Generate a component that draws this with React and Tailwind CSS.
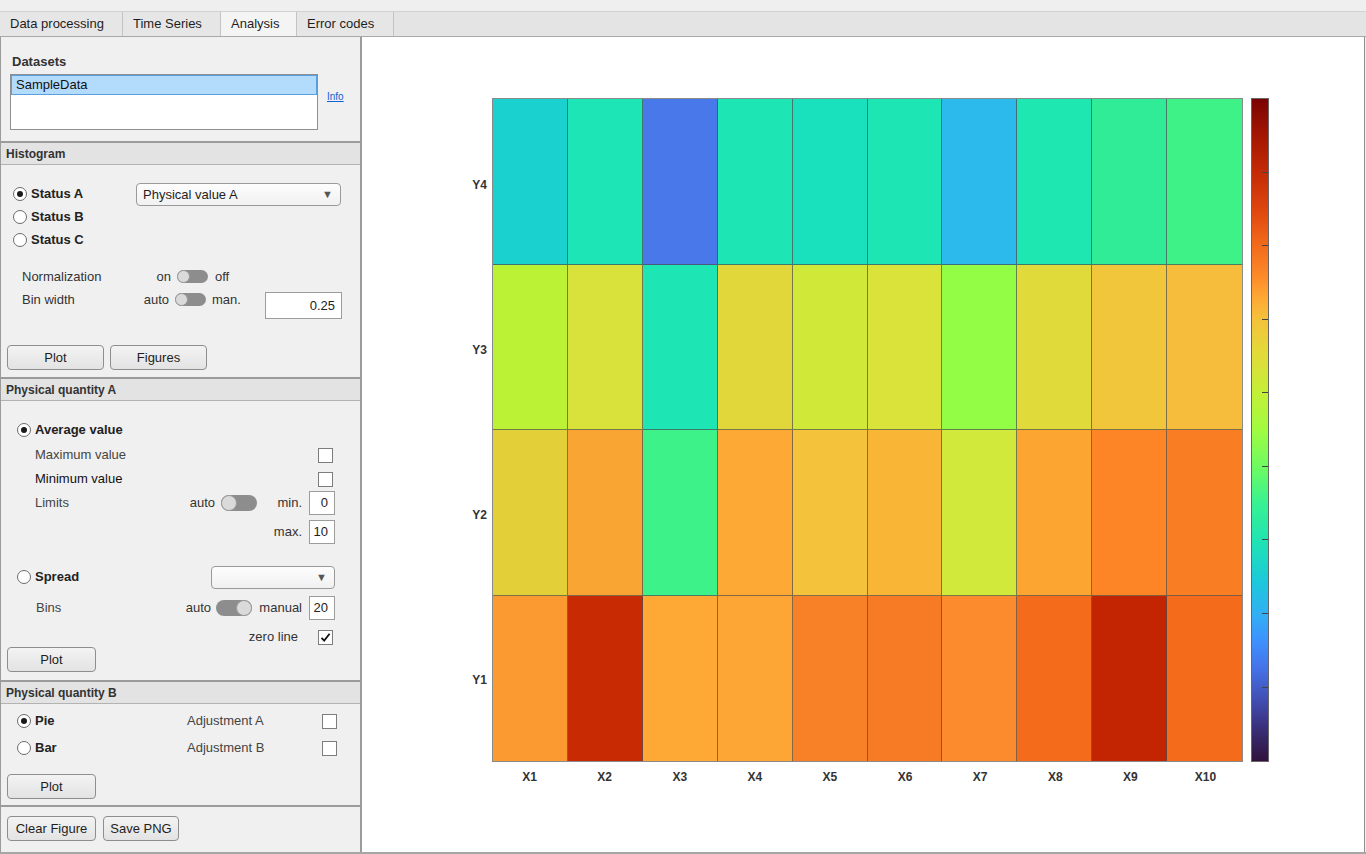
import React from "react";

const tabs = [
  { label: "Data processing", w: "w-[123px]" },
  { label: "Time Series", w: "w-[98px]" },
  { label: "Analysis", w: "w-[76px]", active: true },
  { label: "Error codes", w: "w-[97px]" },
];

// rows from top (Y4) to bottom (Y1)
const cells = [
  ["#1bd1cf", "#1de5b6", "#4878ea", "#1ee5b4", "#1ae1bd", "#1de5b4", "#2cbaec", "#1ee7b1", "#30ec97", "#3ff287"],
  ["#bcf236", "#d8e23a", "#1de5b4", "#e1d63a", "#d0e838", "#dae33a", "#93fd45", "#e0da3a", "#f2c63b", "#f5bd3b"],
  ["#e3cf38", "#f9a534", "#3ef28a", "#fda935", "#f5c23c", "#f9b536", "#d0e93a", "#fda531", "#fd8525", "#f97e23"],
  ["#fb9a30", "#c82a04", "#fea835", "#fda535", "#f88026", "#f77a24", "#fb8b2c", "#f56b1c", "#c32503", "#f56b1c"],
];

const Radio = ({ checked }) => (
  <span className="flex h-[14px] w-[14px] shrink-0 items-center justify-center rounded-full border border-[#6b6b6b] bg-white">
    {checked && <span className="h-[6px] w-[6px] rounded-full bg-[#1a1a1a]" />}
  </span>
);

const Checkbox = ({ checked }) => (
  <span className="flex h-[15px] w-[15px] shrink-0 items-center justify-center border border-[#7d7d7d] bg-white">
    {checked && (
      <svg width="11" height="11" viewBox="0 0 11 11">
        <path d="M1.5 5.8 L4.2 8.6 L9.6 1.8" fill="none" stroke="#111" strokeWidth="1.8" />
      </svg>
    )}
  </span>
);

const Toggle = ({ right, size }) => (
  <span
    className={`flex shrink-0 rounded-full bg-[#8d8d8d] ${size} ${right ? "justify-end" : "justify-start"}`}
  >
    <span className="aspect-square h-full rounded-full border border-[#9a9a9a] bg-[#dadada]" />
  </span>
);

const Button = ({ children, w }) => (
  <div
    className={`flex h-[25px] ${w} items-center justify-center rounded-[4px] border border-[#8e8e8e] bg-gradient-to-b from-[#f3f3f3] to-[#e3e3e3] text-[13px] text-[#1e1e1e]`}
  >
    {children}
  </div>
);

const NumBox = ({ value, w, h }) => (
  <div className={`flex ${w} ${h} shrink-0 items-center justify-end border border-[#9c9c9c] bg-white pr-[6px] text-[13px] text-[#222]`}>
    {value}
  </div>
);

const Dropdown = ({ text, w }) => (
  <div className={`flex h-[23px] ${w} shrink-0 items-center rounded-[4px] border border-[#9a9a9a] bg-gradient-to-b from-[#fdfdfd] to-[#f1f1f1] pl-[6px] pr-[7px] text-[13px] text-[#1e1e1e]`}>
    <span>{text}</span>
    <span className="ml-auto text-[11px] text-[#555]">▼</span>
  </div>
);

const Header = ({ children }) => (
  <div className="flex h-[22px] items-center border-b border-[#b3b3b3] bg-[#e3e3e3] pl-[5px] text-[12px] font-bold text-[#333]">
    {children}
  </div>
);

const LeftPanel = () => (
  <div className="flex w-[362px] flex-col border-l border-r-2 border-[#9b9b9b] bg-[#f0f0f0] text-[13px] text-[#333]">
    {/* Datasets */}
    <div className="h-[106px] border-b-2 border-[#9b9b9b] pt-[17px]">
      <div className="h-[16px] pl-[11px] text-[13px] font-bold leading-[16px] text-[#333]">Datasets</div>
      <div className="mt-[4px] flex">
        <div className="ml-[9px] h-[56px] w-[308px] border border-[#8f8f8f] bg-white">
          <div className="flex h-[20px] items-center border border-[#5a9fe0] bg-[#b3dbfb] pl-[4px] text-[13px] text-[#111]">
            SampleData
          </div>
        </div>
        <span className="ml-[9px] mt-[17px] self-start text-[10px] leading-[12px] text-[#0b63d3] underline">Info</span>
      </div>
    </div>

    {/* Histogram */}
    <div className="h-[236px] border-b-2 border-[#9b9b9b]">
      <Header>Histogram</Header>
      <div className="pt-[17px]">
        <div className="flex">
          <div className="w-[135px] pl-[12px]">
            {["Status A", "Status B", "Status C"].map((s, i) => (
              <div key={s} className="flex h-[23px] items-center gap-[4px]">
                <Radio checked={i === 0} />
                <span className="font-bold text-[#222]">{s}</span>
              </div>
            ))}
          </div>
          <div className="mt-[1px]">
            <Dropdown text="Physical value A" w="w-[205px]" />
          </div>
        </div>
        <div className="mt-[14px] flex h-[23px] items-center pl-[21px]">
          <span className="w-[115px]">Normalization</span>
          <span className="w-[34px] text-right">on</span>
          <span className="ml-[6px]">
            <Toggle size="w-[31px] h-[13px]" />
          </span>
          <span className="ml-[7px]">off</span>
        </div>
        <div className="flex items-start pl-[21px]">
          <span className="h-[23px] w-[115px] leading-[23px]">Bin width</span>
          <span className="h-[23px] w-[32px] text-right leading-[23px]">auto</span>
          <span className="ml-[6px] flex h-[23px] items-center">
            <Toggle size="w-[31px] h-[13px]" />
          </span>
          <span className="ml-[6px] h-[23px] w-[53px] leading-[23px]">man.</span>
          <div className="mt-[4px]">
            <NumBox value="0.25" w="w-[77px]" h="h-[27px]" />
          </div>
        </div>
        <div className="mt-[26px] flex gap-[6px] pl-[6px]">
          <Button w="w-[97px]">Plot</Button>
          <Button w="w-[97px]">Figures</Button>
        </div>
      </div>
    </div>

    {/* Physical quantity A */}
    <div className="h-[303px] border-b-2 border-[#9b9b9b]">
      <Header>Physical quantity A</Header>
      <div className="pt-[17px]">
        <div className="flex h-[24px] items-center gap-[4px] pl-[16px]">
          <Radio checked />
          <span className="font-bold text-[#222]">Average value</span>
        </div>
        <div className="mt-[1px] flex h-[24px] items-center justify-between pl-[34px] pr-[27px]">
          <span className="text-[#444]">Maximum value</span>
          <Checkbox />
        </div>
        <div className="flex h-[24px] items-center justify-between pl-[34px] pr-[27px]">
          <span className="text-[#111]">Minimum value</span>
          <Checkbox />
        </div>
        <div className="flex h-[24px] items-center pl-[34px] pr-[25px]">
          <span className="text-[#444]">Limits</span>
          <span className="ml-auto">auto</span>
          <span className="ml-[6px]">
            <Toggle size="w-[36px] h-[16px]" />
          </span>
          <span className="w-[45px] text-right">min.</span>
          <span className="ml-[7px]">
            <NumBox value="0" w="w-[26px]" h="h-[24px]" />
          </span>
        </div>
        <div className="mt-[5px] flex h-[24px] items-center justify-end pr-[25px]">
          <span>max.</span>
          <span className="ml-[7px]">
            <NumBox value="10" w="w-[26px]" h="h-[24px]" />
          </span>
        </div>
        <div className="mt-[21px] flex h-[24px] items-center pl-[16px] pr-[25px]">
          <Radio />
          <span className="ml-[4px] font-bold text-[#222]">Spread</span>
          <span className="ml-auto">
            <Dropdown text="" w="w-[124px]" />
          </span>
        </div>
        <div className="mt-[7px] flex h-[24px] items-center pl-[35px] pr-[25px]">
          <span className="text-[#444]">Bins</span>
          <span className="ml-auto">auto</span>
          <span className="ml-[5px]">
            <Toggle right size="w-[36px] h-[16px]" />
          </span>
          <span className="w-[50px] text-right">manual</span>
          <span className="ml-[7px]">
            <NumBox value="20" w="w-[26px]" h="h-[24px]" />
          </span>
        </div>
        <div className="mt-[7px] flex h-[20px] items-center justify-end pr-[27px]">
          <span>zero line</span>
          <span className="ml-[20px]">
            <Checkbox checked />
          </span>
        </div>
        <div className="pl-[6px]">
          <Button w="w-[89px]">Plot</Button>
        </div>
      </div>
    </div>

    {/* Physical quantity B */}
    <div className="h-[125px] border-b-2 border-[#9b9b9b]">
      <Header>Physical quantity B</Header>
      <div className="pt-[5px]">
        {[
          ["Pie", "Adjustment A"],
          ["Bar", "Adjustment B"],
        ].map(([r, adj], i) => (
          <div key={r} className={`flex h-[24px] items-center pr-[23px] ${i === 1 ? "mt-[3px]" : ""}`}>
            <div className="flex w-[186px] items-center gap-[4px] pl-[16px]">
              <Radio checked={i === 0} />
              <span className="font-bold text-[#222]">{r}</span>
            </div>
            <span className="flex-1 text-[#444]">{adj}</span>
            <Checkbox />
          </div>
        ))}
        <div className="mt-[14px] pl-[6px]">
          <Button w="w-[89px]">Plot</Button>
        </div>
      </div>
    </div>

    {/* Bottom actions */}
    <div className="flex flex-1 gap-[7px] pl-[6px] pt-[9px]">
      <Button w="w-[89px]">Clear Figure</Button>
      <Button w="w-[76px]">Save PNG</Button>
    </div>
  </div>
);

const Heatmap = () => (
  <div className="flex flex-1 flex-col border-r border-[#8e8e8e] bg-white pt-[61px]">
    <div className="flex pl-[100px]">
      <div className="mr-[5px] flex h-[664px] w-[25px] flex-col pt-[4px]">
        {["Y4", "Y3", "Y2", "Y1"].map((y) => (
          <div key={y} className="flex flex-1 items-center justify-end text-[12px] font-bold text-[#333]">
            {y}
          </div>
        ))}
      </div>
      <div className="grid h-[664px] w-[751px] grid-cols-10 grid-rows-4 border border-[#8a8a8a]">
        {cells.map((row, r) =>
          row.map((c, ci) => (
            <div
              key={`${r}-${ci}`}
              className={`border-[#4d4d4d]/70 ${ci < 9 ? "border-r" : ""} ${r < 3 ? "border-b" : ""}`}
              style={{ backgroundColor: c }}
            />
          ))
        )}
      </div>
      <div className="ml-[8px] flex h-[664px] w-[18px] flex-col border border-[#666] bg-[linear-gradient(to_top,#30123b_0%,#3a2f7a_5%,#414db0_9%,#4672e8_14%,#3e90fd_18%,#32aef5_22%,#1cc8dc_27%,#1ee3b4_33%,#38f292_39%,#6afb64_44%,#a0fc40_50%,#c6ee36_56%,#e4d83a_62%,#f5c03a_67%,#fea834_70%,#fd8c2a_73%,#f26a1c_78%,#e0480f_83%,#c42a05_89%,#a01501_95%,#7a0403_100%)]">
        {Array.from({ length: 9 }).map((_, i) => (
          <div key={i} className="flex flex-1 items-end justify-end">
            {i < 8 && <div className="h-px w-[6px] bg-[#444]" />}
          </div>
        ))}
      </div>
    </div>
    <div className="ml-[130px] grid h-[29px] w-[751px] grid-cols-10 items-center pt-[1px]">
      {Array.from({ length: 10 }).map((_, i) => (
        <div key={i} className="text-center text-[12px] font-bold text-[#333]">
          X{i + 1}
        </div>
      ))}
    </div>
  </div>
);

export default function App() {
  return (
    <div className="flex h-[854px] w-[1366px] flex-col overflow-hidden bg-[#efefef] font-['Liberation_Sans',Arial,sans-serif]">
      <div className="h-[11px] shrink-0" />
      <div className="flex h-[26px] shrink-0 border-y border-t-[#d2d2d2] border-b-[#a9a9a9] bg-[#e4e4e4]">
        {tabs.map((t) => (
          <div
            key={t.label}
            className={`flex ${t.w} items-center border-r border-[#c4c4c4] pl-[10px] text-[13px] text-[#1e1e1e] ${t.active ? "bg-[#f4f4f4]" : "bg-[#e6e6e6]"}`}
          >
            {t.label}
          </div>
        ))}
      </div>
      <div className="flex h-[815px] shrink-0">
        <LeftPanel />
        <Heatmap />
        <div className="w-[1px]" />
      </div>
      <div className="h-[2px] bg-[#a6a6a6]" />
    </div>
  );
}
